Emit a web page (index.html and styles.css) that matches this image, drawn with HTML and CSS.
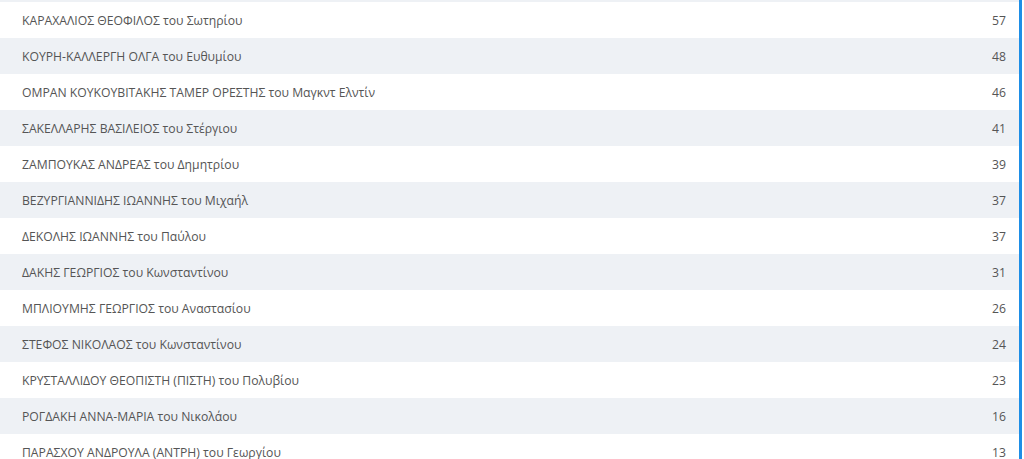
FILE: index.html
```html
<!DOCTYPE html>
<html lang="el">
<head>
<meta charset="utf-8">
<title>Λίστα</title>
<link rel="stylesheet" href="styles.css">
</head>
<body>
<div class="frame">
  <div class="list">
    <div class="row"><span class="name">ΚΑΡΑΧΑΛΙΟΣ ΘΕΟΦΙΛΟΣ του Σωτηρίου</span><span class="num">57</span></div>
    <div class="row"><span class="name">ΚΟΥΡΗ-ΚΑΛΛΕΡΓΗ ΟΛΓΑ του Ευθυμίου</span><span class="num">48</span></div>
    <div class="row"><span class="name">ΟΜΡΑΝ ΚΟΥΚΟΥΒΙΤΑΚΗΣ ΤΑΜΕΡ ΟΡΕΣΤΗΣ του Μαγκντ Ελντίν</span><span class="num">46</span></div>
    <div class="row"><span class="name">ΣΑΚΕΛΛΑΡΗΣ ΒΑΣΙΛΕΙΟΣ του Στέργιου</span><span class="num">41</span></div>
    <div class="row"><span class="name">ΖΑΜΠΟΥΚΑΣ ΑΝΔΡΕΑΣ του Δημητρίου</span><span class="num">39</span></div>
    <div class="row"><span class="name">ΒΕΖΥΡΓΙΑΝΝΙΔΗΣ ΙΩΑΝΝΗΣ του Μιχαήλ</span><span class="num">37</span></div>
    <div class="row"><span class="name">ΔΕΚΟΛΗΣ ΙΩΑΝΝΗΣ του Παύλου</span><span class="num">37</span></div>
    <div class="row"><span class="name">ΔΑΚΗΣ ΓΕΩΡΓΙΟΣ του Κωνσταντίνου</span><span class="num">31</span></div>
    <div class="row"><span class="name">ΜΠΛΙΟΥΜΗΣ ΓΕΩΡΓΙΟΣ του Αναστασίου</span><span class="num">26</span></div>
    <div class="row"><span class="name">ΣΤΕΦΟΣ ΝΙΚΟΛΑΟΣ του Κωνσταντίνου</span><span class="num">24</span></div>
    <div class="row"><span class="name">ΚΡΥΣΤΑΛΛΙΔΟΥ ΘΕΟΠΙΣΤΗ (ΠΙΣΤΗ) του Πολυβίου</span><span class="num">23</span></div>
    <div class="row"><span class="name">ΡΟΓΔΑΚΗ ΑΝΝΑ-ΜΑΡΙΑ του Νικολάου</span><span class="num">16</span></div>
    <div class="row"><span class="name">ΠΑΡΑΣΧΟΥ ΑΝΔΡΟΥΛΑ (ΑΝΤΡΗ) του Γεωργίου</span><span class="num">13</span></div>
  </div>
  <div class="edge"></div>
</div>
</body>
</html>
```
FILE: styles.css
```css
html, body {
  margin: 0;
  padding: 0;
  background: #ffffff;
  overflow: hidden;
}
.frame {
  display: flex;
  width: 1024px;
  height: 459px;
  overflow: hidden;
}
.list {
  width: 1019px;
  flex: none;
  border-top: 2px solid #eef1f5;
}
.edge {
  width: 3px;
  flex: none;
  background: #1e8ee6;
}
.row {
  display: flex;
  justify-content: space-between;
  align-items: center;
  height: 36px;
  padding: 0 13px 0 22px;
  font-family: "Open Sans", "DejaVu Sans", sans-serif;
  font-size: 12.2px;
  color: #555555;
}
.row:nth-child(even) {
  background: #eef1f5;
}
```
